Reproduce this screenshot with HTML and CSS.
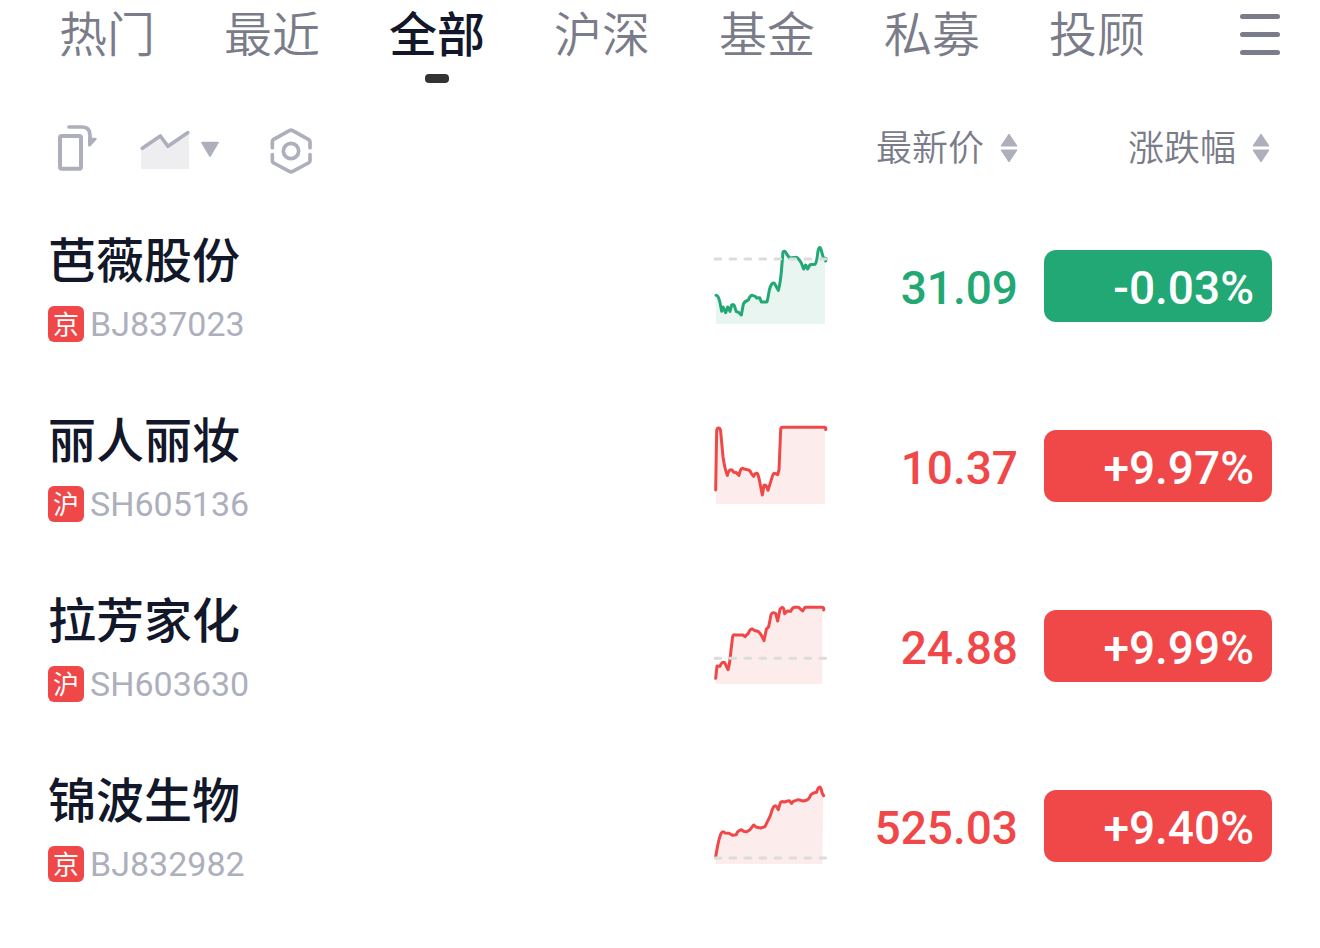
FILE: index.html
```
<!DOCTYPE html>
<html lang="zh-CN">
<head>
  <meta charset="UTF-8" />
  <meta name="viewport" content="width=device-width, initial-scale=1.0" />
  <title>自选股</title>
  <link rel="stylesheet" href="styles.css">
</head>
<body>
  <nav class="tabs">
    <a href="#">热门</a>
    <a href="#">最近</a>
    <a href="#" class="active">全部</a>
    <a href="#">沪深</a>
    <a href="#">基金</a>
    <a href="#">私募</a>
    <a href="#">投顾</a>
    <button class="menu-button" aria-label="菜单"><span></span><span></span><span></span></button>
  </nav>

  <table class="stocks">
    <colgroup>
      <col>
      <col class="col-chart">
      <col class="col-price">
      <col class="col-change">
    </colgroup>
    <thead>
      <tr>
        <th>
          <div class="toolbar">
            <button aria-label="旋转屏幕">
              <svg width="44" height="52" viewBox="48 39 132 156">
                <rect x="60" y="78" width="63" height="98" rx="5" fill="none" stroke="#adb0bc" stroke-width="12"/>
                <path d="M87 51H127Q150 51 150 76V88" fill="none" stroke="#adb0bc" stroke-width="11" stroke-linecap="round"/>
                <path d="M145 83H167Q173 85 169 89L152 108Q145 113 144 106V86Z" fill="#adb0bc"/>
              </svg>
            </button>
            <button aria-label="走势图">
              <svg width="88" height="52" viewBox="300 39 264 156">
                <path d="M303 116L361 77L384 109L447 68V177H303Z" fill="#eeeef1"/>
                <path d="M307 115L361 78L384 109L443 68" fill="none" stroke="#adb0bc" stroke-width="11" stroke-linecap="round" stroke-linejoin="round"/>
                <path d="M486 98H534L510 138Z" fill="#adb0bc" stroke="#adb0bc" stroke-width="5" stroke-linejoin="round"/>
              </svg>
            </button>
            <button aria-label="设置">
              <svg width="46" height="52" viewBox="684 39 138 156">
                <g fill="none" stroke="#adb0bc" stroke-width="11" stroke-linecap="round" stroke-linejoin="round">
                  <path d="M697 113V95Q697 91 701 88L748 62Q753 59 758 62L805 88Q810 91 810 95V113"/>
                  <path d="M697 134V152Q697 156 701 159L748 184Q753 187 758 184L805 159Q810 156 810 152V134"/>
                  <circle cx="753" cy="123" r="23"/>
                </g>
              </svg>
            </button>
          </div>
        </th>
        <th></th>
        <th class="price">
          <button class="sort">最新价
            <svg width="18" height="32" viewBox="0 0 18 32"><path d="M9 1L17 13H1ZM9 29L17 17H1Z"/></svg>
          </button>
        </th>
        <th class="change">
          <button class="sort">涨跌幅
            <svg width="18" height="32" viewBox="0 0 18 32"><path d="M9 1L17 13H1ZM9 29L17 17H1Z"/></svg>
          </button>
        </th>
      </tr>
    </thead>
    <tbody>
      <tr class="down">
        <td>
          <div class="name">芭薇股份</div>
          <div class="code"><span class="tag">京</span>BJ837023</div>
        </td>
        <td>
          <svg class="chart" viewBox="42 27 342 252">
            <path class="area" d="M48 181L54 185L60 200L65 225L69 214L77 230L83 214L90 226L96 210L102 210L109 230L116 232L124 240L131 206L145 194L153 181L166 184L177 189L184 201L201 201L208 165L216 143L224 144L235 166L243 120L250 50L257 49L269 70L290 68L304 84L311 97L317 88L323 97L330 88L345 88L351 60L357 36L362 38L370 67L375 73V267H48Z"/>
            <path class="line" d="M48 181C56 181 57 192 60 203L65 229L69 216L77 233L83 216L90 229L95 210Q102 206 104 215L109 230L116 232L124 240L130 208Q133 199 145 195Q150 181 157 181L166 184L170 189L179 188L184 201H201Q204 189 208 165Q215 138 224 146L235 166Q241 145 244 110L249 51Q255 44 260 57L269 69L290 67Q295 69 304 84L311 102L317 90L323 102L330 89L345 88Q350 84 354 48Q358 30 363 43L370 68L378 71L377 78"/>
            <path class="base" d="M45 72H378"/>
          </svg>
        </td>
        <td class="price">31.09</td>
        <td><div class="badge">-0.03%</div></td>
      </tr>
      <tr class="up">
        <td>
          <div class="name">丽人丽妆</div>
          <div class="code"><span class="tag">沪</span>SH605136</div>
        </td>
        <td>
          <svg class="chart" viewBox="42 27 342 252">
            <path class="area" d="M48 225L51 45L60 43L72 142L81 180L89 165L101 173L116 180L124 161L143 165L160 184L172 175L187 240L196 209L203 222L219 177L235 175L242 38H375V267H48Z"/>
            <path class="line" d="M47 225L50 48Q51 38 56 39Q61 39 62 50L69 125Q74 161 82 181Q87 158 98 167Q100 174 108 172L117 181Q122 155 130 161L143 164Q151 165 153 174L161 184Q165 173 172 175Q175 178 180 205L187 240L192 211Q198 205 204 226L218 181Q221 172 226 176L233 179L237 165L242 45Q242 37 248 37H373Q379 37 377 44"/>
          </svg>
        </td>
        <td class="price">10.37</td>
        <td><div class="badge">+9.97%</div></td>
      </tr>
      <tr class="up">
        <td>
          <div class="name">拉芳家化</div>
          <div class="code"><span class="tag">沪</span>SH603630</div>
        </td>
        <td>
          <svg class="chart" viewBox="42 27 342 252">
            <path class="area" d="M47 250L51 213L61 213L69 200L84 223L98 122L130 120L153 101L175 112L192 136L213 57L231 69L243 37L256 50L275 45L285 37L308 45L316 37H367V267H48Z"/>
            <path class="line" d="M47 250L51 213L60 214Q65 199 74 203L84 224Q89 210 93 165L98 125Q99 117 106 120H129L135 125L145 115Q150 101 157 102L165 107Q176 106 183 119L192 137L199 103L206 95L213 60Q216 50 227 55L233 78L240 43Q247 33 251 41L254 56L262 48L272 49Q277 37 285 37H296L308 48L315 37H365Q373 37 371 45"/>
            <path class="base" d="M45 190H378"/>
          </svg>
        </td>
        <td class="price">24.88</td>
        <td><div class="badge">+9.99%</div></td>
      </tr>
      <tr class="up">
        <td>
          <div class="name">锦波生物</div>
          <div class="code"><span class="tag">京</span>BJ832982</div>
        </td>
        <td>
          <svg class="chart" viewBox="42 27 342 252">
            <path class="area" d="M47 245L57 195L68 170L99 181L124 164L140 170L161 151L180 158L195 155L223 92L236 103L244 81L294 74L325 75L337 54L358 37L370 60L367 267H48Z"/>
            <path class="line" d="M47 245C51 224 56 187 64 174Q69 167 75 174L87 175L97 181L109 179Q112 166 125 164Q131 171 140 170L150 164L161 150L170 157L182 159L195 155L211 122Q220 88 228 93L235 104L241 83Q245 78 253 81L267 77L275 85L280 79L295 74L309 78Q325 77 330 65Q332 55 350 52Q354 36 360 36Q364 41 366 53L371 62"/>
            <path class="base" d="M45 249H378"/>
          </svg>
        </td>
        <td class="price">525.03</td>
        <td><div class="badge">+9.40%</div></td>
      </tr>
    </tbody>
  </table>
</body>
</html>
```

FILE: styles.css
```
* {
  box-sizing: border-box;
  margin: 0;
  padding: 0;
}
body {
  background-color: #fff;
  color: #12172a;
  font-family: Roboto, 'Noto Sans CJK SC', sans-serif;
}
button {
  border: none;
  background: none;
  font: inherit;
  color: inherit;
  cursor: pointer;
}
svg {
  display: block;
}
.tabs {
  height: 102px;
  padding: 0 40px 0 59px;
  display: flex;
  align-items: flex-start;
  gap: 69px;
}
.tabs a {
  position: relative;
  font-size: 48px;
  line-height: 72px;
  font-weight: 350;
  white-space: nowrap;
  color: #7a7c89;
  text-decoration: none;
}
.tabs .active {
  font-weight: 500;
  color: #12172a;
}
.tabs .active::after {
  content: "";
  position: absolute;
  left: 50%;
  top: 74px;
  width: 24px;
  height: 9px;
  margin-left: -12px;
  border-radius: 4px;
  background-color: #333;
}
.menu-button {
  height: 68px;
  margin-left: auto;
  display: flex;
  flex-direction: column;
  justify-content: center;
  gap: 13px;
}
.menu-button span {
  width: 40px;
  height: 5px;
  border-radius: 3px;
  background-color: #7a7c89;
}
.stocks {
  width: calc(100% - 96px);
  margin: 0 48px;
  table-layout: fixed;
  border-collapse: collapse;
}
.col-chart {
  width: 114px;
}
.col-price {
  width: 216px;
}
.col-change {
  width: 228px;
}
.stocks th {
  height: 94px;
  font-weight: 350;
}
.stocks td {
  height: 180px;
  vertical-align: middle;
}
.toolbar {
  padding-left: 8px;
  display: flex;
  align-items: center;
  gap: 40px;
}
.sort {
  display: flex;
  align-items: center;
  gap: 16px;
  margin-left: auto;
  font-size: 36px;
  line-height: 52px;
  color: #7a7c89;
}
.sort svg {
  fill: #adb0bc;
  stroke: #adb0bc;
  stroke-linejoin: round;
}
.stocks .price {
  padding-right: 26px;
  text-align: right;
}
.stocks .change {
  padding-right: 2px;
}
.name {
  font-size: 48px;
  line-height: 66px;
  font-weight: 500;
}
.code {
  margin-top: 10px;
  display: flex;
  align-items: center;
  gap: 6px;
  font-size: 34px;
  line-height: 38px;
  color: #adb0bc;
}
.tag {
  width: 36px;
  height: 36px;
  border-radius: 6px;
  background-color: #f04848;
  color: #fff;
  font-size: 26px;
  text-align: center;
}
.chart {
  width: 114px;
  height: 84px;
}
.chart path {
  fill: none;
  stroke-linecap: round;
  stroke-linejoin: round;
}
.chart .base {
  stroke: #dcdcdc;
  stroke-width: 9;
  stroke-dasharray: 17 28;
}
.chart .line {
  stroke-width: 9;
}
.up .line {
  stroke: #f04848;
}
.up .area {
  fill: #fdecec;
}
.down .line {
  stroke: #22a875;
}
.down .area {
  fill: #e8f5f0;
}
td.price,
.badge {
  font-size: 46px;
  line-height: 76px;
  font-weight: 500;
}
.up .price {
  color: #f04848;
}
.down .price {
  color: #22a875;
}
td.price {
  padding-top: 4px;
}
.badge {
  height: 72px;
  padding-right: 18px;
  border-radius: 12px;
  color: #fff;
  text-align: right;
}
.up .badge {
  background-color: #f04848;
}
.down .badge {
  background-color: #22a875;
}
.chart .area {
  stroke: none;
}
```
